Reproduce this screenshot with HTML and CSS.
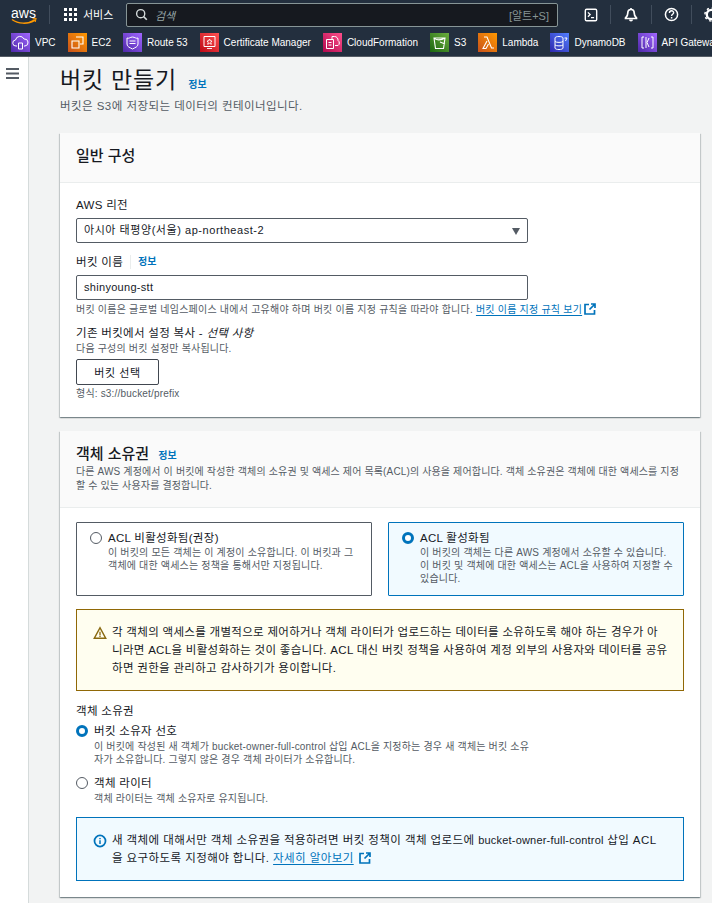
FILE: index.html
```html
<!DOCTYPE html>
<html lang="ko">
<head>
<meta charset="utf-8">
<title>버킷 만들기</title>
<link rel="stylesheet" href="styles.css">
</head>
<body>
<header class="topnav">
  <div class="globalbar">
    <svg class="awslogo" viewBox="0 0 26 24" width="26" height="24"><text x="0" y="14.500" class="awstext">aws</text><path d="M1 16.500c6 4.500 16 5 23 .5" fill="none" stroke="#f90" stroke-width="1.500"/><path d="M21.500 15.800l3.500-.3-.8 3.500" fill="none" stroke="#f90" stroke-width="1.100"/></svg>
    <span class="navsep sep1"></span>
    <svg class="gridicon" viewBox="0 0 13 13" width="13" height="13"><path d="M0 0h3v3H0zM5 0h3v3H5zM10 0h3v3h-3zM0 5h3v3H0zM5 5h3v3H5zM10 5h3v3h-3zM0 10h3v3H0zM5 10h3v3H5zM10 10h3v3h-3z" fill="#fff"/></svg>
    <span class="services">서비스</span>
    <div class="search">
      <svg viewBox="0 0 16 16" width="13" height="13"><circle cx="7" cy="7" r="5" fill="none" stroke="#d5dbdb" stroke-width="1.700"/><path d="M10.500 10.500l4 4" stroke="#d5dbdb" stroke-width="2"/></svg>
      <span class="searchph">검색</span>
      <span class="shortcut">[알트+S]</span>
    </div>
    <div class="tools">
      <svg viewBox="0 0 16 16" width="14" height="14"><rect x="1.500" y="1.500" width="13" height="13" rx="1.500" fill="none" stroke="#fff" stroke-width="1.600"/><path d="M4.500 5l2.500 2.500L4.500 10M8 11h3.500" fill="none" stroke="#fff" stroke-width="1.500"/></svg>
      <span class="navsep"></span>
      <svg viewBox="0 0 16 16" width="16" height="16"><path d="M8 2.500c-2.300 0-3.200 1.800-3.200 3.600 0 2.400-.8 3.800-2.300 4.900v.5h11V11c-1.500-1.100-2.300-2.500-2.300-4.900 0-1.800-.9-3.600-3.200-3.600z" fill="none" stroke="#fff" stroke-width="1.700"/><path d="M6 12.500h4a2 2 0 0 1-4 0zM7.200 1h1.600v2H7.200z" fill="#fff"/></svg>
      <span class="navsep"></span>
      <svg viewBox="0 0 16 16" width="15" height="15"><circle cx="8" cy="8" r="6.500" fill="none" stroke="#fff" stroke-width="1.600"/><path d="M5.800 6.300c0-3 4.500-3 4.500-.2 0 1.700-2.200 1.700-2.200 3.400" fill="none" stroke="#fff" stroke-width="1.500"/><path d="M7.300 10.700h1.600v1.600H7.300z" fill="#fff"/></svg>
      <span class="navsep"></span>
      <svg viewBox="0 0 16 16" width="15" height="15"><circle cx="8" cy="8" r="5" fill="none" stroke="#fff" stroke-width="2.500"/><circle cx="8" cy="8" r="7" fill="none" stroke="#fff" stroke-width="1.600" stroke-dasharray="2.500 3"/></svg>
    </div>
  </div>
  <nav class="favbar">
    <a class="fav"><span class="favicon purple"><svg viewBox="0 0 19 19"><path d="M6 13H5a3 3 0 0 1-.5-6A4.500 4.500 0 0 1 13 6a3.500 3.500 0 0 1 1 7h-1M7.500 10h4v6h-4z" fill="none" stroke="#fff" stroke-width="1"/></svg></span>VPC</a>
    <a class="fav"><span class="favicon orange"><svg viewBox="0 0 19 19"><path d="M8 4h7v7h-3M4 8h7v7H4z" fill="none" stroke="#fff" stroke-width="1.100"/></svg></span>EC2</a>
    <a class="fav"><span class="favicon violet"><svg viewBox="0 0 19 19"><path d="M4 5c2 1 3-1 5.500-1S13 6 15 5v6c0 3-3 3.500-5.500 5C7 14.500 4 14 4 11z" fill="none" stroke="#fff" stroke-width="1"/><path d="M6.500 8h6M6.500 10.500h6" stroke="#fff" stroke-width="1"/></svg></span>Route 53</a>
    <a class="fav"><span class="favicon red"><svg viewBox="0 0 19 19"><path d="M4 3.500h11v10H4z" fill="none" stroke="#fff" stroke-width="1"/><path d="M7 15.500h5M9.500 6l1 2h1.500l-1.200 1.300.5 2-1.800-1-1.800 1 .5-2L7 8h1.500z" fill="none" stroke="#fff" stroke-width=".9"/></svg></span>Certificate Manager</a>
    <a class="fav"><span class="favicon pink"><svg viewBox="0 0 19 19"><path d="M3.500 6.500h7v9h-7zM9 6V3.500h2.500A3.500 3.500 0 0 1 15 7.500a3 3 0 0 1 0 5h-3M5.500 9.500h3M5.500 12h3" fill="none" stroke="#fff" stroke-width="1"/></svg></span>CloudFormation</a>
    <a class="fav"><span class="favicon green"><svg viewBox="0 0 19 19"><path d="M4 5h11l-1.500 10.500h-8zM4 5c2 2.500 7 2.500 11 0M10 9l5 2" fill="none" stroke="#fff" stroke-width="1.100"/></svg></span>S3</a>
    <a class="fav"><span class="favicon amber"><svg viewBox="0 0 19 19"><path d="M6 4h3l4.500 11H16M9 8l-4 7.500h3L10.500 11" fill="none" stroke="#fff" stroke-width="1.100"/></svg></span>Lambda</a>
    <a class="fav"><span class="favicon blue"><svg viewBox="0 0 19 19"><path d="M5 5c0-2 8-2 8 0v10c0 2-8 2-8 0zM5 8.500c1.500 1.200 6.500 1.200 8 0M5 12c1.500 1.200 6.500 1.200 8 0M14.500 5H17l-1.500 3" fill="none" stroke="#fff" stroke-width="1"/></svg></span>DynamoDB</a>
    <a class="fav"><span class="favicon violet"><svg viewBox="0 0 19 19"><path d="M6 4H4v11h2M13 4h2v11h-2M8 4v11M11 5L9 9.500 11 14" fill="none" stroke="#fff" stroke-width="1"/></svg></span>API Gateway</a>
  </nav>
</header>

<div class="shell">
  <aside class="siderail">
    <svg viewBox="0 0 13 11" width="13" height="11"><path d="M0 1h13M0 5.500h13M0 10h13" stroke="#545b64" stroke-width="2"/></svg>
  </aside>
  <main class="content">
    <div class="pagehead">
      <h1>버킷 만들기 <a class="info infolarge">정보</a></h1>
      <p class="pagedesc">버킷은 S3에 저장되는 데이터의 컨테이너입니다.</p>
    </div>

    <section class="card card-general">
      <div class="cardhead">
        <h2>일반 구성</h2>
      </div>
      <div class="cardbody">
        <label class="fieldlabel">AWS 리전</label>
        <div class="select">아시아 태평양(서울) ap-northeast-2<span class="caret"></span></div>
        <div class="fieldlabel labelrow labelname">버킷 이름<span class="vdiv"></span><a class="info">정보</a></div>
        <div class="input">shinyoung-stt</div>
        <p class="hint hintname">버킷 이름은 글로벌 네임스페이스 내에서 고유해야 하며 버킷 이름 지정 규칙을 따라야 합니다. <a class="extlink">버킷 이름 지정 규칙 보기</a><svg class="exticon" viewBox="0 0 12 12" width="12" height="12"><path d="M5 1.500H1v9.500h9.500V7M7 1h4v4M11 1L5.500 6.500" fill="none" stroke="#0073bb" stroke-width="1.700"/></svg></p>
        <div class="fieldlabel labelcopy">기존 버킷에서 설정 복사 - <em>선택 사항</em></div>
        <p class="hint hintcopy">다음 구성의 버킷 설정만 복사됩니다.</p>
        <button class="btn">버킷 선택</button>
        <p class="hint hintformat">형식: s3://bucket/prefix</p>
      </div>
    </section>

    <section class="card card-own">
      <div class="cardhead cardhead-own">
        <h2>객체 소유권 <a class="info">정보</a></h2>
        <p class="hint">다른 AWS 계정에서 이 버킷에 작성한 객체의 소유권 및 액세스 제어 목록(ACL)의 사용을 제어합니다. 객체 소유권은 객체에 대한 액세스를 지정할 수 있는 사용자를 결정합니다.</p>
      </div>
      <div class="cardbody cardbody-own">
        <div class="tiles">
          <div class="tile">
            <span class="radio"></span>
            <div class="tiletext">
              <div class="optname">ACL 비활성화됨(권장)</div>
              <p class="hint">이 버킷의 모든 객체는 이 계정이 소유합니다. 이 버킷과 그 객체에 대한 액세스는 정책을 통해서만 지정됩니다.</p>
            </div>
          </div>
          <div class="tile tile-on">
            <span class="radio radio-on"></span>
            <div class="tiletext">
              <div class="optname">ACL 활성화됨</div>
              <p class="hint">이 버킷의 객체는 다른 AWS 계정에서 소유할 수 있습니다. 이 버킷 및 객체에 대한 액세스는 ACL을 사용하여 지정할 수 있습니다.</p>
            </div>
          </div>
        </div>

        <div class="alert alert-warn">
          <svg viewBox="0 0 16 16" width="14" height="14"><path d="M8 2L1.500 14h13z" fill="none" stroke="#8a6a10" stroke-width="1.700"/><path d="M8 6.500v4M8 11.200v1.500" stroke="#8a6a10" stroke-width="1.500"/></svg>
          <p>각 객체의 액세스를 개별적으로 제어하거나 객체 라이터가 업로드하는 데이터를 소유하도록 해야 하는 경우가 아니라면 ACL을 비활성화하는 것이 좋습니다. ACL 대신 버킷 정책을 사용하여 계정 외부의 사용자와 데이터를 공유하면 권한을 관리하고 감사하기가 용이합니다.</p>
        </div>

        <div class="fieldlabel ownlabel">객체 소유권</div>
        <div class="radioopt">
          <span class="radio radio-on"></span>
          <div class="opttext">
            <div class="optname">버킷 소유자 선호</div>
            <p class="hint">이 버킷에 작성된 새 객체가 bucket-owner-full-control 삽입 ACL을 지정하는 경우 새 객체는 버킷 소유자가 소유합니다. 그렇지 않은 경우 객체 라이터가 소유합니다.</p>
          </div>
        </div>
        <div class="radioopt radioopt2">
          <span class="radio"></span>
          <div class="opttext">
            <div class="optname">객체 라이터</div>
            <p class="hint">객체 라이터는 객체 소유자로 유지됩니다.</p>
          </div>
        </div>

        <div class="alert alert-info">
          <svg viewBox="0 0 16 16" width="14" height="14"><circle cx="8" cy="8" r="6.300" fill="none" stroke="#0073bb" stroke-width="2"/><path d="M8 7v4.500M8 4.500v1.500" stroke="#0073bb" stroke-width="1.700"/></svg>
          <p>새 객체에 대해서만 객체 소유권을 적용하려면 버킷 정책이 객체 업로드에 <span class="term">bucket-owner-full-control</span> 삽입 ACL<wbr>을 요구하도록 지정해야 합니다. <a class="extlink">자세히 알아보기</a> <svg class="exticon" viewBox="0 0 12 12" width="12" height="12"><path d="M5 1.500H1v9.500h9.500V7M7 1h4v4M11 1L5.500 6.500" fill="none" stroke="#0073bb" stroke-width="1.700"/></svg></p>
        </div>
      </div>
    </section>
  </main>
</div>
</body>
</html>
```

FILE: styles.css
```css
* { box-sizing: border-box; }
html, body { margin: 0; padding: 0; height: 100%; overflow: hidden; }
body {
  width: 712px;
  height: 903px;
  background: #f2f3f3;
  color: #16191f;
  font-family: "Liberation Sans", "Noto Sans CJK KR", sans-serif;
  font-size: 11px;
}
p, h1, h2 { margin: 0; font-weight: 400; }
.topnav { background: #232f3e; height: 57px; overflow: hidden; border-bottom: 1px solid #545b64; }
.globalbar { display: flex; align-items: center; height: 29px; padding-left: 11px; }
.awslogo { flex: none; }
.awstext { font-size: 14px; fill: #fff; font-family: "Liberation Sans", sans-serif; }
.navsep { display: block; flex: none; width: 1px; height: 19px; background: #414d5c; }
.sep1 { margin-left: 12px; margin-right: 14px; }
.gridicon { flex: none; }
.services { color: #fff; font-size: 11px; margin-left: 6px; width: 43px; flex: none; position: relative; top: -1px; }
.search { flex: none; width: 432px; height: 24px; background: #16191f; border: 1px solid #879596; border-radius: 2px; display: flex; align-items: center; padding: 0 8px; }
.searchph { color: #95a5a6; font-style: italic; font-size: 11px; margin-left: 7px; flex: 1; }
.shortcut { color: #879596; font-size: 11px; }
.tools { display: flex; align-items: center; gap: 12px; margin-left: 26px; flex: none; }
.favbar { display: flex; align-items: center; height: 27px; padding-left: 11px; white-space: nowrap; overflow: hidden; }
.fav { color: #fff; font-size: 10px; display: flex; align-items: center; gap: 5px; margin-right: 12px; flex: none; }
.favicon { width: 19px; height: 19px; display: block; flex: none; }
.favicon svg { display: block; width: 19px; height: 19px; }
.purple { background: linear-gradient(45deg, #4d27a8, #a166ff); }
.orange { background: linear-gradient(45deg, #c8511b, #f90); }
.violet { background: linear-gradient(45deg, #4d27a8, #a166ff); }
.red { background: linear-gradient(45deg, #bd0816, #ff5252); }
.pink { background: linear-gradient(45deg, #b0084d, #ff4f8b); }
.green { background: linear-gradient(45deg, #1b660f, #6cae3e); }
.amber { background: linear-gradient(45deg, #c8511b, #f90); }
.blue { background: linear-gradient(45deg, #2e27ad, #527fff); }

.shell { display: flex; height: 846px; }
.siderail { width: 29px; flex: none; background: #fff; border-right: 1px solid #d5dbdb; padding: 11px 0 0 6px; }
.siderail svg { display: block; }
.content { flex: none; width: 683px; padding: 0 12px 0 31px; overflow: hidden; }
.pagehead { height: 76px; padding-top: 8px; }
h1 { font-size: 23px; line-height: 30px; letter-spacing: .8px; }
.info { color: #0073bb; font-size: 10px; font-weight: 700; letter-spacing: 0; }
.infolarge { margin-left: 4px; }
.pagedesc { color: #545b64; font-size: 11.500px; line-height: 16px; margin-top: -2px; letter-spacing: .45px; }

.card { background: #fff; box-shadow: 0 1px 1px 0 rgba(0,28,36,.3), 1px 1px 1px 0 rgba(0,28,36,.15), -1px 1px 1px 0 rgba(0,28,36,.15); }
.card-general { height: 284px; margin-bottom: 14px; }
.cardhead { background: #fafafa; border-bottom: 1px solid #eaeded; height: 50px; padding: 14px 16px 0; }
.cardhead h2 { font-size: 15px; font-weight: 500; line-height: 18px; }
.cardbody { padding: 15px 16px 0; }
.fieldlabel { font-size: 11.500px; line-height: 14px; letter-spacing: .3px; }
.select, .input { height: 25px; width: 452px; border: 1px solid #545b64; border-radius: 2px; background: #fff; padding: 0 7px; line-height: 23px; font-size: 11px; margin-top: 6px; position: relative; letter-spacing: .55px; }
.input { letter-spacing: .3px; }
.caret { position: absolute; right: 7px; top: 9px; border-left: 4.500px solid transparent; border-right: 4.500px solid transparent; border-top: 7px solid #545b64; }
.labelrow { display: flex; align-items: center; }
.labelname { margin-top: 12px; }
.vdiv { width: 1px; height: 14px; background: #eaeded; margin: 0 7px; }
.hint { color: #545b64; font-size: 10px; line-height: 13px; letter-spacing: .18px; }
.hintname { margin-top: 3px; white-space: nowrap; letter-spacing: .22px; }
.term { font-size: 11px; letter-spacing: .2px; }
.extlink { color: #0073bb; text-decoration: underline; text-underline-offset: 2px; }
.exticon { vertical-align: -2px; margin-left: 2px; }
.labelcopy { margin-top: 10px; }
.labelcopy em { font-style: italic; }
.hintcopy { margin-top: 2px; }
.btn { display: block; width: 83px; height: 26px; background: #fff; border: 1px solid #414750; border-radius: 2px; font: 11px "Liberation Sans", "Noto Sans CJK KR", sans-serif; letter-spacing: .6px; color: #16191f; margin-top: 4px; padding: 0; }
.hintformat { margin-top: 2px; }

.card-own { height: 466px; }
.cardhead-own { height: 77px; padding-top: 14px; }
.cardhead-own .hint { margin-top: 0; line-height: 14px; letter-spacing: .14px; }
.cardhead-own .info { margin-left: 5px; }
.cardbody-own { padding: 14px 16px 0; }
.tiles { display: grid; grid-template-columns: 296px 296px; gap: 16px; }
.tile { height: 74px; border: 1px solid #545b64; padding: 8px 10px 0 13px; display: flex; gap: 6px; border-radius: 1px; }
.tile-on { border-color: #0073bb; background: #f1faff; }
.radio { width: 12px; height: 12px; border-radius: 50%; border: 1px solid #545b64; background: #fff; flex: none; margin-top: 1px; display: block; }
.radio-on { border: 3.500px solid #0073bb; }
.tiletext { flex: 1; }
.optname { font-size: 11.500px; line-height: 15px; letter-spacing: .3px; }
.tiletext .hint { margin-top: 0; }
.alert { display: flex; gap: 5px; border: 1px solid #8a6a10; padding: 13px 15px 0 16px; font-size: 11.500px; letter-spacing: .3px; }
.alert svg { flex: none; margin-top: 3px; }
.alert p { line-height: 18px; }
.alert-warn { height: 82px; margin-top: 13px; background: #fffef0; border-color: #906806; }
.alert-info { height: 64px; margin-top: 12px; padding-right: 22px; background: #f1faff; border-color: #0073bb; letter-spacing: .42px; }
.ownlabel { margin-top: 13px; }
.radioopt { display: flex; gap: 6px; margin-top: 6px; }
.radioopt2 { margin-top: 10px; }
.opttext { width: 437px; }
.opttext .hint { margin-top: 1px; }
```
